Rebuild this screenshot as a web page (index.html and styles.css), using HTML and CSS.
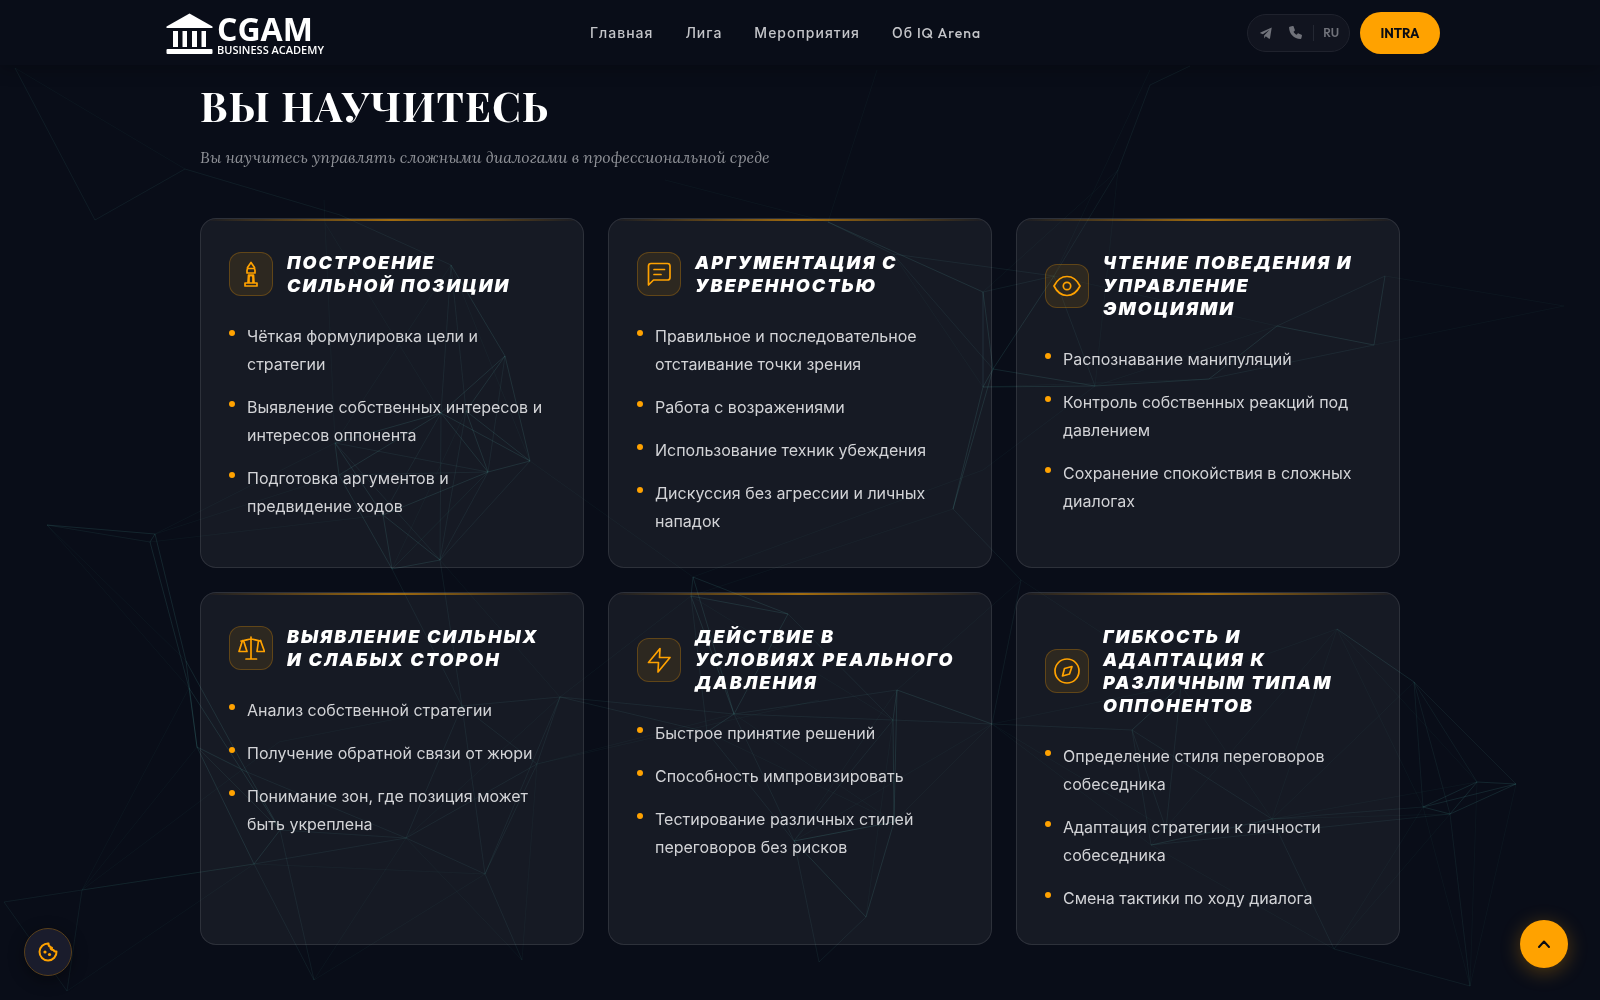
FILE: index.html
```html
<!DOCTYPE html>
<html lang="ru">
<head>
<meta charset="utf-8">
<meta name="viewport" content="width=device-width, initial-scale=1">
<title>IQ Arena — Вы научитесь</title>
<link rel="stylesheet" href="styles.css">
</head>
<body>
<svg class="network" viewBox="0 0 1600 1000" preserveAspectRatio="xMidYMid slice" aria-hidden="true">
  <path class="edge-strong" d="M451 265L505 356L530 461L488 472L441 413M505 356L466 411L530 461M505 356L441 413M466 411L488 472M441 413L530 461M335 443L339 475L441 413L335 443M339 475L392 569L440 560L383 515L392 569M383 515L335 443M488 472L383 515M828 222L983 292V387L993 369L983 292M993 369L1095 386L1209 379L1277 326L1374 345L1385 276M983 387L1095 386M983 387L953 509M993 369L953 509M993 369L1054 276M47 525L155 534L150 542L189 688L197 747L247 772M155 534L186 661L197 747L254 864L280 830L247 772M186 661L247 772M189 688L280 830M693 577L691 596L788 614L734 714L707 732M693 577L788 614M693 577L734 714M691 596L734 714M897 690L893 720L894 822M897 690L992 724M897 690L894 822L866 917L794 841L894 822M1151 845L1272 819M1132 730L1181 685M1423 807L1450 814L1477 782L1516 784L1423 807L1477 782M1450 814L1516 784M1337 629L1414 682"/>
  <path class="edge" d="M15 68L95 220L185 169L340 215L451 265M1190 66L1150 85L1118 170L1054 276L1095 386M983 292L1054 276M451 265L441 413M451 265L466 411M505 356L488 472M530 461L440 560M488 472L440 560M466 411L440 560M441 413L383 515M441 413L440 560M335 443L488 472M339 475L488 472M335 443L440 560M828 222L893 254L1054 276M893 254L993 369M953 509L1021 580L992 724L1132 730L1151 845M1132 730L1166 829L1181 685M1132 730L1272 819L1334 949L1470 986M1272 819L1423 807M1277 326L1385 276M1209 379L1374 345M440 560L462 706L560 697L537 764L485 874L522 960M392 569L462 706L537 764M462 706L406 838L485 874M560 697L485 874M254 864L406 838L280 830M247 772L406 838L537 764M462 706L485 874M254 864L314 980L280 830M197 747L280 830M47 525L150 542M82 890L4 902L67 991L82 890L254 864M560 697L707 732M560 697L734 714L893 720L992 724M734 714L897 690M691 596L707 732L794 841L819 962L866 917M788 614L893 720M734 714L794 841L893 720M1414 682L1423 807M1414 682L1450 814M1414 682L1477 782M1414 682L1516 784M1450 814L1470 986M1151 845L1450 814"/>
  <path class="edge-faint" d="M324 200L325 223L335 443L155 534M339 475L155 534M383 515L150 542M335 443L451 265M325 223L441 413M451 265L530 461M466 411L392 569M488 472L392 569M530 461L693 577M488 472L392 569M665 180L828 222L877 70M893 254L983 387M1118 170L983 292M1150 70L1054 276M1118 170L1095 386M1054 276L1277 326M1385 276L1564 306L1374 345M1095 386L1277 326M983 387L1209 379M1095 386L983 470L693 577M953 509L691 596M1021 580L1181 685L1337 629L1151 845M1021 580L897 690M992 724L1181 685M992 724L1151 845L1334 949M992 724L1166 829M1181 685L1272 819L1337 629M1337 629L1423 807L1470 986M1337 629L1477 782L1470 986L1516 784M1334 949L1450 814M1423 807L1334 949M1414 682L1272 819M560 697L691 596M537 764L734 714M537 764L819 700M485 874L254 864L82 890L197 747M82 890L189 688L47 525L186 661M82 890L279 742L462 706M67 991L254 864M406 838L314 980L485 874M406 838L522 960L537 764M560 697L406 838M440 560L560 697M734 714L894 822L794 841L897 690M866 917L893 720M894 822L992 724L794 841M691 596L893 720M707 732L894 822M1450 814L1272 819M15 68L185 169M1272 819L1477 782"/>
</svg>

<header class="header">
  <div class="header-inner">
    <a class="logo" href="#" aria-label="CGAM Business Academy">
      <svg class="logo-mark" viewBox="0 0 47 42" aria-hidden="true">
        <path d="M23.500 0.500L46.500 13.500V15H0.500V13.500Z"/>
        <path d="M7 18H12V34H7ZM16.500 18H21V34H16.500ZM26 18H31V34H26ZM35.500 18H40V34H35.500Z"/>
        <rect x="0.500" y="36" width="46" height="5" rx="1"/>
      </svg>
      <span class="logo-text"><span class="logo-name">CGAM</span><span class="logo-sub">BUSINESS ACADEMY</span></span>
    </a>
    <nav class="nav">
      <a href="#">Главная</a>
      <a href="#">Лига</a>
      <a href="#">Мероприятия</a>
      <a href="#">Об IQ Arena</a>
    </nav>
    <div class="header-side">
      <div class="contacts">
        <a href="#" aria-label="Telegram"><svg width="12" height="12" viewBox="0 0 24 24" aria-hidden="true"><path d="M23.500 1L20 22.500C19.800 23.500 19 23.800 18 23.300L11.500 18.600L8.300 22.800V16.800L19 5.500L5.800 14.500L0.800 12.500C0 12 0 11.300 1 10.800Z"/></svg></a>
        <a href="#" aria-label="Телефон"><svg width="13" height="13" viewBox="0 0 24 24" aria-hidden="true"><path d="M8.500 0.800L10.700 7C11 7.900 10.800 8.400 10.200 9L8.300 10.600C9.800 13.500 11.500 15 14.200 16.200L15.800 14.100C16.300 13.500 16.900 13.400 17.700 13.700L23.100 16.100C23.900 16.500 24 17 23.900 17.800L22.800 22.700C22.600 23.500 22 23.900 21.200 23.900C9 23.500 0.500 14.800 0.100 2.800C0.100 2 0.500 1.400 1.300 1.200L6.500 0.100C7.600-0.100 8.200 0 8.500 0.800Z"/></svg></a>
        <a class="lang" href="#">RU</a>
      </div>
      <button class="cta" type="button">INTRA</button>
    </div>
  </div>
</header>

<main class="section">
  <h1 class="title">ВЫ НАУЧИТЕСЬ</h1>
  <p class="subtitle">Вы научитесь управлять сложными диалогами в профессиональной среде</p>

  <div class="cards">
    <article class="card">
      <div class="card-head">
        <span class="badge"><svg viewBox="0 0 28 28" aria-hidden="true"><path d="M14 2.500L10.500 7.500V8.500H17.500V7.500ZM10.500 8.500L10 10.500V13H18V10.500L17.500 8.500M11.500 15H16.500M11.500 15L11 22.500M16.500 15L17 22.500M12 22V17.500A2 2 0 0 1 16 17.500V22M8 23H20V26H8Z"/></svg></span>
        <h2>ПОСТРОЕНИЕ<br>СИЛЬНОЙ ПОЗИЦИИ</h2>
      </div>
      <ul>
        <li>Чёткая формулировка цели и<br>стратегии</li>
        <li>Выявление собственных интересов и интересов оппонента</li>
        <li>Подготовка аргументов и<br>предвидение ходов</li>
      </ul>
    </article>
    <article class="card">
      <div class="card-head">
        <span class="badge"><svg viewBox="0 0 28 28" aria-hidden="true"><path d="M3.500 25V6A2.500 2.500 0 0 1 6 3.500H22.500A2.500 2.500 0 0 1 25 6V17.500A2.500 2.500 0 0 1 22.500 20H8.500ZM9 9.500H19.500M9 14.500H16"/></svg></span>
        <h2>АРГУМЕНТАЦИЯ С<br>УВЕРЕННОСТЬЮ</h2>
      </div>
      <ul>
        <li>Правильное и последовательное отстаивание точки зрения</li>
        <li>Работа с возражениями</li>
        <li>Использование техник убеждения</li>
        <li>Дискуссия без агрессии и личных<br>нападок</li>
      </ul>
    </article>
    <article class="card">
      <div class="card-head">
        <span class="badge"><svg viewBox="0 0 28 28" aria-hidden="true"><path d="M1 14C4 8 8.500 4.500 14 4.500S24 8 27 14C24 20 19.500 23.500 14 23.500S4 20 1 14Z"/><circle cx="14" cy="14" r="3.700"/></svg></span>
        <h2>ЧТЕНИЕ ПОВЕДЕНИЯ И<br>УПРАВЛЕНИЕ<br>ЭМОЦИЯМИ</h2>
      </div>
      <ul>
        <li>Распознавание манипуляций</li>
        <li>Контроль собственных реакций под<br>давлением</li>
        <li>Сохранение спокойствия в сложных диалогах</li>
      </ul>
    </article>
    <article class="card">
      <div class="card-head">
        <span class="badge"><svg viewBox="0 0 28 28" aria-hidden="true"><path d="M14 3V25M9 25H19.500M4 7C8 7 11 5 14 5S20 7 24 7M5.500 6.500L2 17.500H10L6.500 6.500M21.500 6.500L20 17.500H27.500L23.500 6.500"/></svg></span>
        <h2>ВЫЯВЛЕНИЕ СИЛЬНЫХ<br>И СЛАБЫХ СТОРОН</h2>
      </div>
      <ul>
        <li>Анализ собственной стратегии</li>
        <li>Получение обратной связи от жюри</li>
        <li>Понимание зон, где позиция может<br>быть укреплена</li>
      </ul>
    </article>
    <article class="card">
      <div class="card-head">
        <span class="badge"><svg viewBox="0 0 28 28" aria-hidden="true"><path d="M15 2.500L3.500 16.500H13.500L13 26L25 11.500H14.500Z"/></svg></span>
        <h2>ДЕЙСТВИЕ В<br>УСЛОВИЯХ РЕАЛЬНОГО<br>ДАВЛЕНИЯ</h2>
      </div>
      <ul>
        <li>Быстрое принятие решений</li>
        <li>Способность импровизировать</li>
        <li>Тестирование различных стилей<br>переговоров без рисков</li>
      </ul>
    </article>
    <article class="card">
      <div class="card-head">
        <span class="badge"><svg viewBox="0 0 28 28" aria-hidden="true"><circle cx="14" cy="14" r="12"/><path d="M19 9.500L16.500 17L9.500 19L11.500 11.500Z"/></svg></span>
        <h2>ГИБКОСТЬ И<br>АДАПТАЦИЯ К<br>РАЗЛИЧНЫМ ТИПАМ<br>ОППОНЕНТОВ</h2>
      </div>
      <ul>
        <li>Определение стиля переговоров<br>собеседника</li>
        <li>Адаптация стратегии к личности<br>собеседника</li>
        <li>Смена тактики по ходу диалога</li>
      </ul>
    </article>
  </div>
</main>

<button class="float float-cookie" type="button" aria-label="Настройки cookie">
  <svg width="20" height="20" viewBox="0 0 20 20" aria-hidden="true"><path d="M10.500 1.500A8.500 8.500 0 1 0 18.500 9.500C17 9.800 16 9.200 15.500 8C13.500 8.200 12.300 7 12.500 5C11 4.400 10.300 3.200 10.500 1.500Z"/><g class="dots"><circle cx="7" cy="10" r="1.600"/><circle cx="11.500" cy="12.500" r="1.600"/><circle cx="13.500" cy="6" r="1.600"/></g></svg>
</button>
<button class="float float-top" type="button" aria-label="Наверх">
  <svg width="14" height="14" viewBox="0 0 14 14" aria-hidden="true"><path d="M2 10L7 4.500L12 10"/></svg>
</button>
</body>
</html>
```
FILE: styles.css
```css
* {
  box-sizing: border-box;
}

body {
  margin: 0;
  min-height: 100vh;
  overflow: hidden;
  background: #090d18;
  color: #fff;
  font-family: Inter, "Noto Sans", sans-serif;
}

a {
  color: inherit;
  text-decoration: none;
}

/* polygon mesh behind the page */
.network {
  position: fixed;
  inset: 0;
  z-index: -1;
  width: 100%;
  height: 100%;
  fill: none;
  stroke: #4fa8a0;
}

.edge-strong {
  stroke-opacity: 0.16;
}

.edge {
  stroke-opacity: 0.1;
}

.edge-faint {
  stroke-opacity: 0.05;
}

.header {
  background: #090d18;
  box-shadow: 0 4px 16px rgba(0, 0, 0, 0.25);
}

.header-inner {
  display: flex;
  align-items: center;
  justify-content: space-between;
  max-width: 1280px;
  height: 65px;
  margin: 0 auto;
  padding-left: 6px;
}

.logo {
  display: flex;
  gap: 4px;
  padding-top: 2px;
  font-family: "Open Sans", "Noto Sans", sans-serif;
}

.logo-mark {
  width: 47px;
  height: 42px;
  fill: #fff;
}

.logo-text {
  display: flex;
  flex-direction: column;
}

.logo-name {
  font-size: 32px;
  font-weight: 700;
  line-height: 32px;
}

.logo-sub {
  font-size: 11px;
  font-weight: 600;
  line-height: 10px;
}

.nav {
  display: flex;
  gap: 32px;
  color: #c4c5c9;
  font: 500 14px/24px Outfit, Inter, "Noto Sans", sans-serif;
  letter-spacing: 1px;
}

.header-side {
  display: flex;
  align-items: center;
  gap: 10px;
}

.contacts {
  display: flex;
  align-items: center;
  height: 38px;
  padding: 0 10px 0 12px;
  border: 1px solid #1f222d;
  border-radius: 19px;
  background: #11141f;
  color: #70727a;
}

.contacts a {
  display: flex;
}

.contacts svg {
  margin-right: 17px;
  fill: currentColor;
}

.contacts a:nth-child(2) svg {
  margin-right: 11px;
}

.contacts .lang {
  padding-left: 9px;
  border-left: 1px solid #242833;
  font: 600 12px/16px Outfit, Lato, sans-serif;
}

.cta {
  width: 80px;
  height: 42px;
  border: 0;
  border-radius: 21px;
  background: #ffa200;
  color: #0a0c14;
  font: 700 13px/20px Outfit, Lato, sans-serif;
}

.section {
  max-width: 1248px;
  margin: 0 auto;
  padding: 14px 24px 54px;
}

.title {
  margin: 0;
  font: 700 41px/52px "Playfair Display", "Liberation Serif", serif;
  letter-spacing: 1px;
}

.subtitle {
  margin: 14px 0 49px;
  color: #8f9197;
  font: italic 16px/24px Lora, "Liberation Serif", serif;
}

.cards {
  display: grid;
  grid-template-columns: repeat(3, 1fr);
  gap: 24px;
}

.card {
  position: relative;
  padding: 32px 28px;
  overflow: hidden;
  border: 1px solid rgba(255, 255, 255, 0.1);
  border-radius: 16px;
  background: rgba(255, 255, 255, 0.055);
}

.card::before {
  content: "";
  position: absolute;
  top: 0;
  left: 0;
  right: 0;
  height: 2px;
  background: linear-gradient(90deg, transparent, #ffa200, transparent);
  opacity: 0.6;
}

.card-head {
  display: flex;
  align-items: center;
  gap: 14px;
  margin-bottom: 25px;
}

.badge {
  display: flex;
  flex: none;
  align-items: center;
  justify-content: center;
  width: 44px;
  height: 44px;
  border: 1px solid rgba(255, 162, 0, 0.25);
  border-radius: 12px;
  background: rgba(255, 162, 0, 0.1);
}

.badge svg {
  width: 28px;
  height: 28px;
  fill: none;
  stroke: #ffa200;
  stroke-width: 1.700;
  stroke-linejoin: round;
  stroke-linecap: round;
}

.card h2 {
  margin: 0;
  font-size: 18px;
  font-style: italic;
  font-weight: 900;
  line-height: 23px;
  letter-spacing: 2px;
  white-space: nowrap;
}

.card ul {
  display: flex;
  flex-direction: column;
  gap: 15px;
  margin: 0;
  padding: 0;
  list-style: none;
}

.card li {
  position: relative;
  padding-left: 18px;
  color: #d3d4d7;
  font-size: 16px;
  line-height: 28px;
}

.card li::before {
  content: "";
  position: absolute;
  top: 8px;
  left: 0;
  width: 6px;
  height: 6px;
  border-radius: 50%;
  background: #ffa200;
}

.float {
  position: fixed;
  display: flex;
  align-items: center;
  justify-content: center;
  width: 48px;
  height: 48px;
  padding: 0;
  border-radius: 50%;
}

.float svg {
  fill: none;
  stroke-width: 2;
  stroke-linecap: round;
  stroke-linejoin: round;
}

.float-cookie {
  left: 24px;
  bottom: 24px;
  border: 1px solid #59401c;
  background: #1a1c2c;
  box-shadow: 0 4px 16px rgba(0, 0, 0, 0.4);
}

.float-cookie svg {
  stroke: #ffa200;
}

.dots {
  fill: #ffa200;
  stroke: none;
}

.float-top {
  right: 32px;
  bottom: 32px;
  border: 0;
  background: #ffa200;
  box-shadow: 0 4px 20px rgba(255, 162, 0, 0.3);
}

.float-top svg {
  stroke: #0a0c14;
}
```
